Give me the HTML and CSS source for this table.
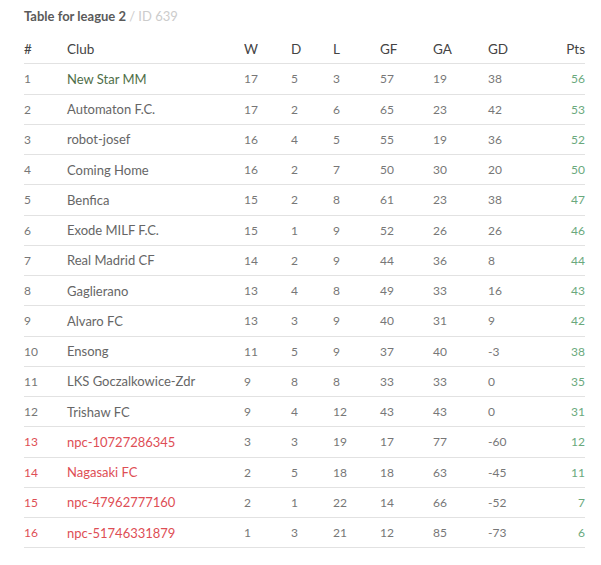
FILE: index.html
```html
<!DOCTYPE html>
<html>
<head>
<meta charset="utf-8">
<link rel="stylesheet" href="styles.css">
</head>
<body>
<div class="wrap">
  <h2 class="title">Table for league 2 <span class="sub">/ ID 639</span></h2>
  <table class="league">
    <colgroup>
      <col class="c-pos"><col class="c-club"><col class="c-w"><col class="c-d"><col class="c-l"><col class="c-gf"><col class="c-ga"><col class="c-gd"><col class="c-pts">
    </colgroup>
    <thead>
      <tr><th>#</th><th>Club</th><th>W</th><th>D</th><th>L</th><th>GF</th><th>GA</th><th>GD</th><th class="pts">Pts</th></tr>
    </thead>
    <tbody>
      <tr class="top"><td>1</td><td class="club">New Star MM</td><td>17</td><td>5</td><td>3</td><td>57</td><td>19</td><td>38</td><td class="pts">56</td></tr>
      <tr><td>2</td><td class="club">Automaton F.C.</td><td>17</td><td>2</td><td>6</td><td>65</td><td>23</td><td>42</td><td class="pts">53</td></tr>
      <tr><td>3</td><td class="club">robot-josef</td><td>16</td><td>4</td><td>5</td><td>55</td><td>19</td><td>36</td><td class="pts">52</td></tr>
      <tr><td>4</td><td class="club">Coming Home</td><td>16</td><td>2</td><td>7</td><td>50</td><td>30</td><td>20</td><td class="pts">50</td></tr>
      <tr><td>5</td><td class="club">Benfica</td><td>15</td><td>2</td><td>8</td><td>61</td><td>23</td><td>38</td><td class="pts">47</td></tr>
      <tr><td>6</td><td class="club">Exode MILF F.C.</td><td>15</td><td>1</td><td>9</td><td>52</td><td>26</td><td>26</td><td class="pts">46</td></tr>
      <tr><td>7</td><td class="club">Real Madrid CF</td><td>14</td><td>2</td><td>9</td><td>44</td><td>36</td><td>8</td><td class="pts">44</td></tr>
      <tr><td>8</td><td class="club">Gaglierano</td><td>13</td><td>4</td><td>8</td><td>49</td><td>33</td><td>16</td><td class="pts">43</td></tr>
      <tr><td>9</td><td class="club">Alvaro FC</td><td>13</td><td>3</td><td>9</td><td>40</td><td>31</td><td>9</td><td class="pts">42</td></tr>
      <tr><td>10</td><td class="club">Ensong</td><td>11</td><td>5</td><td>9</td><td>37</td><td>40</td><td>-3</td><td class="pts">38</td></tr>
      <tr><td>11</td><td class="club">LKS Goczalkowice-Zdr</td><td>9</td><td>8</td><td>8</td><td>33</td><td>33</td><td>0</td><td class="pts">35</td></tr>
      <tr><td>12</td><td class="club">Trishaw FC</td><td>9</td><td>4</td><td>12</td><td>43</td><td>43</td><td>0</td><td class="pts">31</td></tr>
      <tr class="rel"><td>13</td><td class="club">npc-10727286345</td><td>3</td><td>3</td><td>19</td><td>17</td><td>77</td><td>-60</td><td class="pts">12</td></tr>
      <tr class="rel"><td>14</td><td class="club">Nagasaki FC</td><td>2</td><td>5</td><td>18</td><td>18</td><td>63</td><td>-45</td><td class="pts">11</td></tr>
      <tr class="rel"><td>15</td><td class="club">npc-47962777160</td><td>2</td><td>1</td><td>22</td><td>14</td><td>66</td><td>-52</td><td class="pts">7</td></tr>
      <tr class="rel"><td>16</td><td class="club">npc-51746331879</td><td>1</td><td>3</td><td>21</td><td>12</td><td>85</td><td>-73</td><td class="pts">6</td></tr>
    </tbody>
  </table>
</div>
</body>
</html>
```

FILE: styles.css
```css
html, body {
  margin: 0;
  padding: 0;
  background: #fff;
}
body {
  font-family: Lato, "Open Sans", "Liberation Sans", sans-serif;
  color: #666;
  font-size: 13px;
}
.wrap {
  padding: 6px 16px 0 24px;
}
.title {
  margin: 0 0 8px 0;
  font-size: 13px;
  line-height: 20px;
  font-weight: 700;
  color: #5a5a5a;
}
.title .sub {
  font-weight: 400;
  color: #ccc;
}
.league {
  width: 561px;
  border-collapse: collapse;
  table-layout: fixed;
}
.c-pos { width: 43px; }
.c-club { width: 177px; }
.c-w { width: 47px; }
.c-d { width: 42px; }
.c-l { width: 47px; }
.c-gf { width: 53px; }
.c-ga { width: 55px; }
.c-gd { width: 57px; }
.c-pts { width: 40px; }
.league th,
.league td {
  padding: 0;
  text-align: left;
  border-bottom: 1px solid #e2e2e2;
  white-space: nowrap;
}
.league th {
  height: 29.25px;
  font-weight: 400;
  color: #444;
  font-size: 13.5px;
}
.league td {
  height: 29.25px;
  font-size: 12px;
  color: #777;
}
.league td.club {
  font-size: 13px;
  color: #666;
}
.league .pts {
  text-align: right;
}
.league td.pts {
  color: #6aa97d;
}
.league tr.top td.club {
  color: #4f6e48;
}
.league tr.rel td:nth-child(1),
.league tr.rel td.club {
  color: #de4e55;
}
```
